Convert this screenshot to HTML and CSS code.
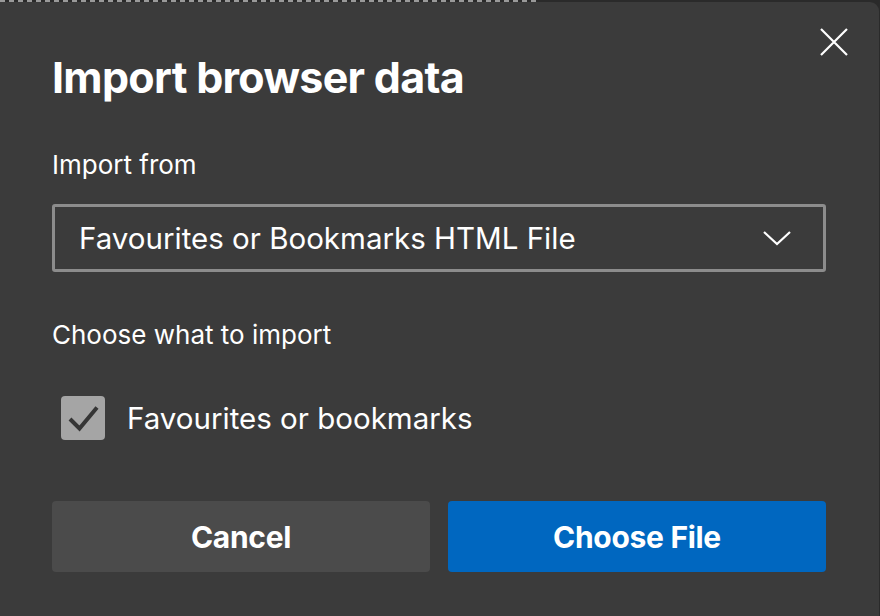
FILE: index.html
```html
<!DOCTYPE html>
<html lang="en">

<head>
    <meta charset="UTF-8">
    <meta name="viewport" content="width=device-width, initial-scale=1.0">
    <title>Import browser data</title>
    <link rel="stylesheet" href="styles.css">
</head>

<body>

    <div class="backdrop-text"></div>

    <div class="dialog">
        <button class="close-btn" aria-label="Close">
            <svg width="28" height="28" viewBox="0 0 28 28">
                <path d="M1 1 L27 27 M27 1 L1 27" stroke="#fff" stroke-width="2.2" fill="none" />
            </svg>
        </button>

        <h1>Import browser data</h1>

        <div class="field-label">Import from</div>
        <div class="select">
            <span>Favourites or Bookmarks HTML File</span>
            <svg width="30" height="16" viewBox="0 0 30 16">
                <path d="M2 2 L15 14 L28 2" stroke="#fff" stroke-width="2.2" fill="none" />
            </svg>
        </div>

        <div class="field-label">Choose what to import</div>
        <label class="check-row">
            <span class="checkbox">
                <svg width="44" height="44" viewBox="0 0 44 44">
                    <path d="M9 23 L18.5 32.5 L36 11.5" stroke="#353535" stroke-width="4" fill="none" />
                </svg>
            </span>
            Favourites or bookmarks
        </label>

        <div class="actions">
            <button class="btn btn-cancel">Cancel</button>
            <button class="btn btn-primary">Choose File</button>
        </div>
    </div>

</body>

</html>
```

FILE: styles.css
```css
body {
    margin: 0;
    background-color: #2a2a2a;
    font-family: Inter, "Open Sans", sans-serif;
    color: #fff;
    overflow: hidden;
}

.backdrop-text {
    height: 2px;
    width: 540px;
    background: repeating-linear-gradient(90deg, #9a9a9a 0 5px, transparent 5px 9px);
}

.dialog {
    position: relative;
    height: 640px;
    margin-right: 1px;
    padding: 0 53px 0 52px;
    background-color: #3b3b3b;
    border-top-right-radius: 9px;
}

.close-btn {
    position: absolute;
    top: 26px;
    right: 31px;
    padding: 0;
    background: none;
    border: none;
    cursor: pointer;
}

h1 {
    margin: 0;
    padding-top: 50px;
    font-size: 43px;
    line-height: 50px;
    font-weight: 700;
    letter-spacing: -0.7px;
}

.field-label {
    margin-top: 48px;
    font-size: 26px;
    line-height: 30px;
}

.select {
    display: flex;
    align-items: center;
    justify-content: space-between;
    height: 62px;
    margin-top: 24px;
    padding: 0 31px 0 24px;
    border: 3px solid #8c8c8c;
    border-radius: 3px;
    font-size: 29.5px;
}

.select + .field-label {
    margin-top: 48px;
}

.check-row {
    display: flex;
    align-items: center;
    gap: 22px;
    margin-top: 46px;
    padding-left: 9px;
    font-size: 29.5px;
}

.checkbox {
    display: flex;
    width: 44px;
    height: 44px;
    background-color: #a5a5a5;
    border-radius: 4px;
}

.actions {
    display: grid;
    grid-template-columns: 1fr 1fr;
    gap: 18px;
    margin-top: 61px;
}

.btn {
    height: 71px;
    border: none;
    border-radius: 4px;
    color: #fff;
    font-family: Inter, sans-serif;
    font-size: 30px;
    font-weight: 700;
    letter-spacing: -0.3px;
    cursor: pointer;
}

.btn-cancel {
    background-color: #4b4b4b;
}

.btn-primary {
    background-color: #0067c0;
}
```
